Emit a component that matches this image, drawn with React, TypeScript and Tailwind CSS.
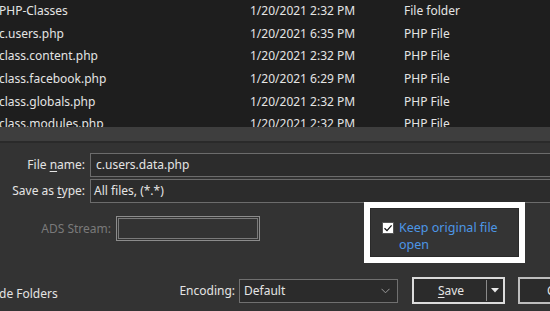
import React from "react"

const rows = [
    { name: "PHP-Classes", date: "1/20/2021 2:32 PM", type: "File folder" },
    { name: "c.users.php", date: "1/20/2021 6:35 PM", type: "PHP File" },
    { name: "class.content.php", date: "1/20/2021 2:32 PM", type: "PHP File" },
    { name: "class.facebook.php", date: "1/20/2021 6:29 PM", type: "PHP File" },
    { name: "class.globals.php", date: "1/20/2021 2:32 PM", type: "PHP File" },
    { name: "class.modules.php", date: "1/20/2021 2:32 PM", type: "PHP File" },
]

export default function App() {
    return (
        <div className="w-[550px] h-[311px] overflow-hidden bg-[#333333] flex flex-col text-[12px] text-[#e4e4e4] font-['Segoe_UI','Noto_Sans',sans-serif] select-none">
            {/* File list */}
            <div className="h-[127px] shrink-0 bg-[#1e1e1e] overflow-hidden">
                {rows.map((r) => (
                    <div key={r.name} className="h-[22.6px] flex items-center whitespace-nowrap">
                        <span className="w-[251px] shrink-0 -ml-[1px]">{r.name}</span>
                        <span className="w-[154px] shrink-0">{r.date}</span>
                        <span>{r.type}</span>
                    </div>
                ))}
            </div>
            <div className="h-[14px] shrink-0 bg-[#3e3e3e]" />
            <div className="h-[2px] shrink-0 bg-[#2a2a2a]" />

            {/* Form */}
            <div className="flex-1 flex flex-col pt-[10px]">
                <div className="flex items-center h-[24px]">
                    <label className="w-[86px] shrink-0 text-right pr-[1px]">
                        File <span className="underline underline-offset-2">n</span>ame:
                    </label>
                    <div className="ml-[4px] h-full w-[500px] shrink-0 border border-[#6c6c6c] bg-[#2c2c2c] flex items-center pl-[5px]">
                        c.users.data.php
                    </div>
                </div>
                <div className="flex items-center h-[24px] mt-[2px]">
                    <label className="w-[86px] shrink-0 text-right pr-[1px]">
                        Save as <span className="underline underline-offset-2">t</span>ype:
                    </label>
                    <div className="ml-[4px] h-full w-[500px] shrink-0 border border-[#6c6c6c] bg-[#2c2c2c] flex items-center pl-[3px]">
                        All files, (*.*)
                    </div>
                </div>

                <div className="flex -mt-[1px]">
                    <div className="flex items-center mt-[14px] h-[25px] self-start">
                        <label className="w-[112px] shrink-0 text-right pr-[1px] text-[#7a7a7a]">ADS Stream:</label>
                        <div className="ml-[4px] w-[144px] h-full border border-[#8c8c8c] p-[1px]">
                            <div className="w-full h-full border border-[#7a7a7a]" />
                        </div>
                    </div>
                    {/* highlighted option */}
                    <div className="ml-[104px] w-[161px] h-[61px] border-[6px] border-white bg-[#2a2a2a] p-[1px]">
                        <div className="w-full h-full bg-[#343434] flex items-start pl-[11px] pt-[10px]">
                            <div className="w-[12px] h-[12px] mt-[3px] bg-white border border-[#555] flex items-center justify-center shrink-0">
                                <svg width="10" height="10" viewBox="0 0 10 10" fill="none">
                                    <path d="M1.5 5.2 L4 7.6 L8.6 2.4" stroke="#111" strokeWidth="1.3" />
                                </svg>
                            </div>
                            <span className="ml-[5px] text-[#4d97e6] text-[12.5px] leading-[17px]">
                                Keep original file<br />open
                            </span>
                        </div>
                    </div>
                </div>

                <div className="flex items-center mt-[14px] h-[27px] whitespace-nowrap">
                    <span className="w-[176px] shrink-0 mt-[6px] -ml-[1px]">de Folders</span>
                    <label className="w-[60px] shrink-0 text-right">Encoding:</label>
                    <div className="ml-[4px] w-[159px] h-[24px] shrink-0 border border-[#707070] bg-[#2b2b2b] flex items-center justify-between pl-[4px] pr-[7px]">
                        <span>Default</span>
                        <svg width="9" height="6" viewBox="0 0 9 6" fill="none">
                            <path d="M0.5 0.8 L4.5 4.8 L8.5 0.8" stroke="#9a9a9a" strokeWidth="1" />
                        </svg>
                    </div>
                    <div className="ml-[14px] w-[93px] h-[27px] shrink-0 border-2 border-[#dcdcdc] bg-[#2b2b2b] flex items-center">
                        <span className="flex-1 text-center pl-[2px]">
                            <span className="underline underline-offset-2">S</span>ave
                        </span>
                        <div className="w-[1px] h-[21px] bg-[#8a8a8a]" />
                        <div className="w-[16px] flex justify-center">
                            <svg width="8" height="5" viewBox="0 0 8 5">
                                <path d="M0 0 L8 0 L4 4.5 Z" fill="#e8e8e8" />
                            </svg>
                        </div>
                    </div>
                    <div className="ml-[13px] w-[80px] h-[27px] shrink-0 border-2 border-[#bdbdbd] bg-[#2b2b2b] flex items-center pl-[27px]">
                        Cancel
                    </div>
                </div>
            </div>
        </div>
    )
}
